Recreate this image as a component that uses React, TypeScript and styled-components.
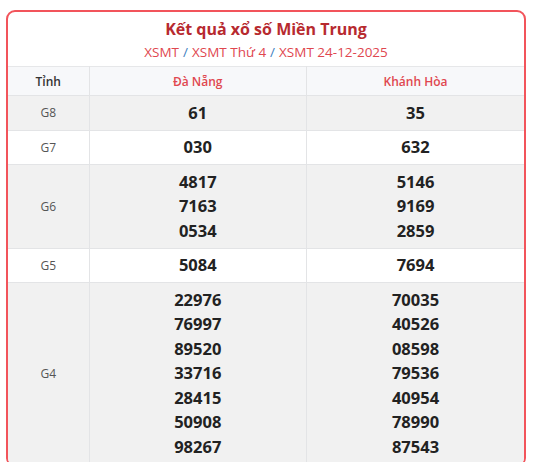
import styled, { createGlobalStyle } from "styled-components";

const GlobalStyle = createGlobalStyle`
  body {
    margin: 0;
    background: #fff;
    font-family: "Open Sans", "Noto Sans", sans-serif;
  }
`;

const Page = styled.div`
  padding: 10px 8px 0 6px;
`;

const Card = styled.div`
  border: 2px solid #f2545b;
  border-radius: 9px;
  overflow: hidden;
  background: #fff;
`;

const Head = styled.div`
  text-align: center;
  padding: 5px 0 4px;
`;

const Title = styled.h2`
  margin: 0;
  font-size: 16px;
  line-height: 25px;
  font-weight: 700;
  color: #b72a2f;
`;

const Crumbs = styled.div`
  font-size: 13.5px;
  line-height: 20px;
  color: #e0474f;
`;

const Slash = styled.span`
  color: #3f7fbf;
  margin: 0 4px;
`;

const Table = styled.table`
  width: 100%;
  border-collapse: collapse;
  table-layout: fixed;
`;

const Th = styled.th<{ $red?: boolean }>`
  background: #f7f8fa;
  border: 1px solid #e3e4e6;
  border-top: 1px solid #e6e7e9;
  height: 28px;
  padding: 0;
  font-size: 12px;
  font-weight: 600;
  color: ${(p) => (p.$red ? "#e0474f" : "#333")};
  &:first-child {
    border-left: none;
  }
  &:last-child {
    border-right: none;
  }
`;

const Tr = styled.tr<{ $alt: boolean }>`
  background: ${(p) => (p.$alt ? "#f1f1f1" : "#fff")};
`;

const Label = styled.td`
  border: 1px solid #e3e4e6;
  border-left: none;
  text-align: center;
  font-size: 12px;
  color: #555;
  padding: 0;
`;

const Nums = styled.td`
  border: 1px solid #e3e4e6;
  text-align: center;
  padding: 4.5px 0;
  &:last-child {
    border-right: none;
  }
`;

const Num = styled.div`
  font-size: 16.5px;
  line-height: 24.5px;
  font-weight: 700;
  color: #222;
`;

const rows: { name: string; a: string[]; b: string[] }[] = [
  { name: "G8", a: ["61"], b: ["35"] },
  { name: "G7", a: ["030"], b: ["632"] },
  { name: "G6", a: ["4817", "7163", "0534"], b: ["5146", "9169", "2859"] },
  { name: "G5", a: ["5084"], b: ["7694"] },
  {
    name: "G4",
    a: ["22976", "76997", "89520", "33716", "28415", "50908", "98267"],
    b: ["70035", "40526", "08598", "79536", "40954", "78990", "87543"],
  },
];

export default function App() {
  return (
    <Page>
      <GlobalStyle />
      <Card>
        <Head>
          <Title>Kết quả xổ số Miền Trung</Title>
          <Crumbs>
            XSMT<Slash>/</Slash>XSMT Thứ 4<Slash>/</Slash>XSMT 24-12-2025
          </Crumbs>
        </Head>
        <Table>
          <colgroup>
            <col style={{ width: 81 }} />
            <col />
            <col />
          </colgroup>
          <thead>
            <tr>
              <Th>Tỉnh</Th>
              <Th $red>Đà Nẵng</Th>
              <Th $red>Khánh Hòa</Th>
            </tr>
          </thead>
          <tbody>
            {rows.map((r, i) => (
              <Tr key={r.name} $alt={i % 2 === 0}>
                <Label>{r.name}</Label>
                <Nums>
                  {r.a.map((n) => (
                    <Num key={n}>{n}</Num>
                  ))}
                </Nums>
                <Nums>
                  {r.b.map((n) => (
                    <Num key={n}>{n}</Num>
                  ))}
                </Nums>
              </Tr>
            ))}
          </tbody>
        </Table>
      </Card>
    </Page>
  );
}
